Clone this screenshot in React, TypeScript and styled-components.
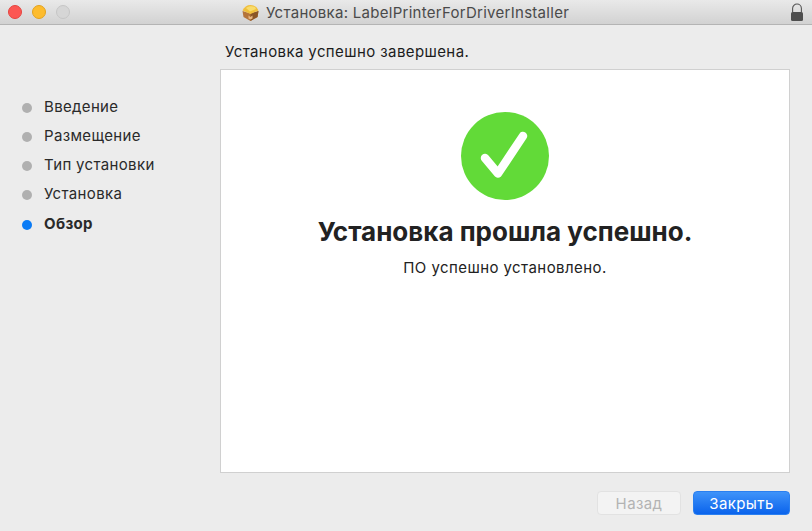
import React from "react";
import styled, { createGlobalStyle } from "styled-components";

const GlobalStyle = createGlobalStyle`
  html, body, #root {
    margin: 0;
    height: 100%;
  }
  body {
    background: #ececec;
    font-family: Inter, "Noto Sans", "Liberation Sans", sans-serif;
    overflow: hidden;
  }
`;

const Window = styled.div`
  width: 812px;
  height: 531px;
  display: flex;
  flex-direction: column;
  background: #ececec;
`;

const TitleBar = styled.header`
  position: relative;
  height: 24px;
  flex: none;
  display: flex;
  align-items: center;
  justify-content: space-between;
  padding: 0 8px;
  background: linear-gradient(#e9e9e9, #d2d2d2);
  border-bottom: 1px solid #b4b4b4;
`;

const Lights = styled.div`
  display: flex;
  gap: 10px;
`;

const Light = styled.span<{ $color: string; $edge: string }>`
  width: 14px;
  height: 14px;
  box-sizing: border-box;
  border-radius: 50%;
  background: ${({ $color }) => $color};
  border: 1px solid ${({ $edge }) => $edge};
`;

const WindowTitle = styled.div`
  position: absolute;
  left: 241px;
  top: 0;
  height: 24px;
  display: flex;
  align-items: center;
  gap: 6px;
  font-size: 15px;
  letter-spacing: 0.28px;
  color: #4a4a4a;
  white-space: nowrap;
`;

const Body = styled.div`
  flex: 1;
  display: flex;
  min-height: 0;
`;

const Sidebar = styled.nav`
  width: 220px;
  flex: none;
  box-sizing: border-box;
  padding-top: 71px;
  padding-left: 22px;
  display: flex;
  flex-direction: column;
  gap: 9.25px;
`;

const Step = styled.div<{ $active?: boolean }>`
  height: 20px;
  display: flex;
  align-items: center;
  gap: 12px;
  font-size: 15px;
  letter-spacing: 0.34px;
  font-weight: ${({ $active }) => ($active ? 700 : 400)};
  color: #2a2a2a;
`;

const Dot = styled.span<{ $active?: boolean }>`
  width: 10px;
  height: 10px;
  margin-top: 3px;
  border-radius: 50%;
  background: ${({ $active }) => ($active ? "#0a7bf5" : "#b0b0b0")};
`;

const Main = styled.main`
  flex: 1;
  display: flex;
  flex-direction: column;
  padding-right: 22px;
  min-width: 0;
`;

const Heading = styled.div`
  height: 44px;
  flex: none;
  box-sizing: border-box;
  padding: 17px 0 0 5px;
  font-size: 15px;
  letter-spacing: 0.4px;
  line-height: 20px;
  color: #1c1c1c;
`;

const Panel = styled.section`
  height: 404px;
  flex: none;
  box-sizing: border-box;
  background: #fff;
  border: 1px solid #d0d0d0;
  display: flex;
  flex-direction: column;
  align-items: center;
  padding-top: 42px;
`;

const Result = styled.h1`
  margin: 15px 0 0;
  font-size: 26px;
  line-height: 34px;
  font-weight: 700;
  color: #222;
`;

const Detail = styled.p`
  margin: 9px 0 0;
  font-size: 15px;
  letter-spacing: 0.43px;
  line-height: 20px;
  color: #222;
`;

const Footer = styled.footer`
  flex: 1;
  display: flex;
  justify-content: flex-end;
  align-items: flex-start;
  gap: 12px;
  padding-top: 18px;
`;

const Button = styled.button<{ $primary?: boolean }>`
  height: 24px;
  box-sizing: border-box;
  padding: 0;
  font-family: inherit;
  font-size: 15px;
  letter-spacing: 0.4px;
  border-radius: 4px;
  width: ${({ $primary }) => ($primary ? "97px" : "84px")};
  color: ${({ $primary }) => ($primary ? "#fff" : "#b3b3b3")};
  background: ${({ $primary }) =>
    $primary ? "linear-gradient(#3f93f9, #0a63ec)" : "#f3f3f3"};
  border: 1px solid ${({ $primary }) => ($primary ? "#2a7ff0" : "#e2e2e2")};
`;

function PackageIcon() {
  return (
    <svg width="19" height="19" viewBox="0 0 19 19">
      <path d="M1.5 8 9.5 10.5l8-2.5-1 6-7 4-7-4z" fill="#b5743a" />
      <path d="M9.5 10.5l8-2.5-1 6-7 4z" fill="#8a5526" />
      <path d="M1.5 7.5C3 4 6 2 9.5 2s6.5 2 8 5.5L9.5 11z" fill="#f0bf3c" />
      <path d="M5 5c2-2 6-2.5 9-1l1 2-6 2.5z" fill="#f8dc6c" />
      <path d="M7.5 12.5 9.5 14l2-1.5v3l-2 1-2-1z" fill="#e7b681" />
    </svg>
  );
}

function LockIcon() {
  return (
    <svg width="14" height="19" viewBox="0 0 14 19">
      <path d="M2.6 9V5.4a4.4 4.4 0 0 1 8.8 0V9" fill="none" stroke="#555" strokeWidth="1.1" />
      <rect x="1" y="9" width="12" height="9" rx="1.5" fill="#4e4e4e" />
    </svg>
  );
}

function CheckBadge() {
  return (
    <svg width="88" height="88" viewBox="0 0 88 88">
      <circle cx="44" cy="44" r="44" fill="#62da38" />
      <path
        d="M24 46 37 61.5 62 24"
        fill="none"
        stroke="#fff"
        strokeWidth="8.5"
        strokeLinecap="round"
        strokeLinejoin="round"
      />
    </svg>
  );
}

const steps = ["Введение", "Размещение", "Тип установки", "Установка", "Обзор"];

export default function App() {
  return (
    <Window>
      <GlobalStyle />
      <TitleBar>
        <Lights>
          <Light $color="#fc5753" $edge="#e5443f" />
          <Light $color="#fdbc2e" $edge="#e3a21e" />
          <Light $color="#d6d6d6" $edge="#c6c6c6" />
        </Lights>
        <WindowTitle>
          <PackageIcon />
          Установка: LabelPrinterForDriverInstaller
        </WindowTitle>
        <LockIcon />
      </TitleBar>
      <Body>
        <Sidebar>
          {steps.map((name, i) => (
            <Step key={name} $active={i === steps.length - 1}>
              <Dot $active={i === steps.length - 1} />
              {name}
            </Step>
          ))}
        </Sidebar>
        <Main>
          <Heading>Установка успешно завершена.</Heading>
          <Panel>
            <CheckBadge />
            <Result>Установка прошла успешно.</Result>
            <Detail>ПО успешно установлено.</Detail>
          </Panel>
          <Footer>
            <Button disabled>Назад</Button>
            <Button $primary>Закрыть</Button>
          </Footer>
        </Main>
      </Body>
    </Window>
  );
}
